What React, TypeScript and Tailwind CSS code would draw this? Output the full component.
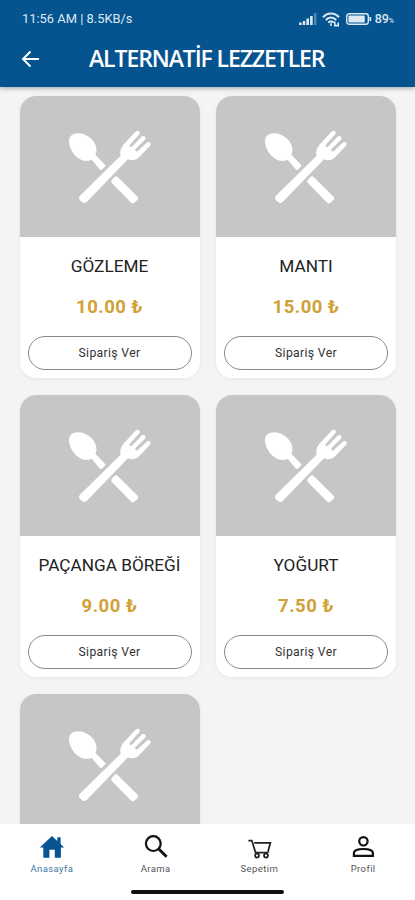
import { useState } from "react";
import type { ComponentType } from "react";

type Product = {
  id: number;
  name?: string;
  price?: string;
};

// A product without details yet shows only its placeholder picture.
const PRODUCTS: Product[] = [
  { id: 1, name: "GÖZLEME", price: "10.00 ₺" },
  { id: 2, name: "MANTI", price: "15.00 ₺" },
  { id: 3, name: "PAÇANGA BÖREĞİ", price: "9.00 ₺" },
  { id: 4, name: "YOĞURT", price: "7.50 ₺" },
  { id: 5 },
];

function Utensils() {
  return (
    <svg viewBox="0 0 300 270" className="w-[100px] h-[90px] -mt-[3px]" aria-hidden="true">
      <g fill="#fff">
        <path d="M27 64C27 48 38 40 54 40C80 40 106 62 109 84C110 92 109 99 106 104L135 134Q138 138 134 141L125 149Q121 151 118 147L95 119C87 123 80 123 72 122C48 118 27 88 27 64Z" />
        <path d="M163 171Q168 166 173 171L233 230Q237 235 233 239L222 249Q217 252 212 247L155 188Q152 184 155 180Z" />
        <path d="M59 228L182 107C178 94 184 81 193 71L228 34Q233 30 238 34Q241 38 238 43L209 75Q207 80 211 81Q214 82 217 79L246 49Q251 46 255 50Q259 54 255 59L226 88Q224 93 228 94Q231 96 234 92L262 67Q267 64 271 68Q274 72 270 77L238 111C228 121 215 123 204 118L80 246Q73 252 66 246L59 240Q55 234 59 228Z" />
      </g>
    </svg>
  );
}

function HomeIcon() {
  return (
    <svg viewBox="0 0 26 24" className="w-[26px] h-6" fill="#075492">
      <path d="M13 1 25.2 12.5H21.9V22.8H15.8V14.8H10.4V22.8H4.3V12.5H.8Z" />
      <path d="M18.3 2.2H21.6V9.8L18.3 7Z" />
    </svg>
  );
}

function SearchIcon() {
  return (
    <svg viewBox="0 0 26 24" className="w-[26px] h-6" fill="none" stroke="#111" strokeWidth="2.2">
      <circle cx="10.3" cy="8.6" r="7.4" />
      <path d="M15.8 14 23.6 21.8" strokeWidth="2.8" />
    </svg>
  );
}

function CartIcon() {
  return (
    <svg viewBox="0 0 26 24" className="w-[26px] h-6" fill="none" stroke="#222" strokeWidth="1.7">
      <path d="M2.4 5.6H5.8L9.6 17.6H22" />
      <path d="M8.2 7.8H24.4L22.3 15.4V17.6" />
      <circle cx="11" cy="20.6" r="2" />
      <circle cx="20" cy="20.6" r="2" />
    </svg>
  );
}

function ProfileIcon() {
  return (
    <svg viewBox="0 0 26 24" className="w-[26px] h-6" fill="none" stroke="#111" strokeWidth="2.2">
      <circle cx="13.4" cy="6.3" r="4.2" />
      <path d="M3.9 20.8V18C3.9 15.6 7.9 14 13.4 14S22.9 15.6 22.9 18V20.8Z" />
    </svg>
  );
}

const TABS: { key: string; label: string; Icon: ComponentType }[] = [
  { key: "home", label: "Anasayfa", Icon: HomeIcon },
  { key: "search", label: "Arama", Icon: SearchIcon },
  { key: "cart", label: "Sepetim", Icon: CartIcon },
  { key: "profile", label: "Profil", Icon: ProfileIcon },
];

function StatusBar() {
  return (
    <div className="h-[37px] pt-px pl-[22px] pr-[21px] flex items-center justify-between text-[#dce9f5]">
      <span className="text-[12.9px] whitespace-nowrap">11:56 AM | 8.5KB/s</span>
      <div className="flex items-center">
        <svg viewBox="0 0 18 12" className="w-[18px] h-3 mr-[5px]" fill="currentColor">
          <path d="M0 9.5H2.6V12H0ZM3.7 8H6.3V12H3.7ZM7.4 5.6H10V12H7.4ZM11.1 3H13.7V12H11.1Z" />
          <path d="M15 0H17.4V12H15Z" opacity=".35" />
        </svg>
        <svg viewBox="0 0 18 15" className="w-[18px] h-[15px] mr-[6px]" fill="none" stroke="currentColor" strokeWidth="2">
          <path d="M1 5.2C5.5 0.3 12.5 0.3 17 5.2" />
          <path d="M3.8 8C7 4.8 11 4.8 14.2 8" />
          <path d="M6.2 10.6C8 9 10 9 11.8 10.6" />
          <path d="M9 11.2V14M12.8 9.5V13.6H16.2V10.6" strokeWidth="1.6" />
        </svg>
        <svg viewBox="0 0 26 12" className="w-[26px] h-3 mr-[3px]">
          <rect x=".7" y=".7" width="21.6" height="10.6" rx="2.6" fill="none" stroke="currentColor" strokeWidth="1.4" />
          <rect x="2.4" y="2.6" width="16.4" height="6.8" rx="1" fill="currentColor" />
          <path d="M23.4 4H25.2V8H23.4Z" fill="currentColor" />
        </svg>
        <span className="text-[12.5px] font-medium leading-none">
          89<span className="text-[7px]">%</span>
        </span>
      </div>
    </div>
  );
}

function ProductCard({ product }: { product: Product }) {
  return (
    <article className="h-[282px] rounded-[16px] overflow-hidden bg-white shadow-[0_1px_4px_rgba(0,0,0,0.06)]">
      <div className="h-[140.5px] bg-[#c6c6c6] flex items-center justify-center">
        <Utensils />
      </div>
      {product.name && (
        <div className="px-2 flex flex-col items-center">
          <h2 className="mt-[17px] h-6 leading-6 text-[17.2px] text-[#222] whitespace-nowrap">{product.name}</h2>
          <p className="mt-[17px] h-6 leading-6 text-[18.5px] font-bold tracking-[0.5px] text-[#d0a135]">
            {product.price}
          </p>
          <button
            type="button"
            className="mt-[17px] w-full h-[34px] rounded-full border border-[#8a8a8a] text-[12.2px] tracking-[0.35px] text-[#333]"
          >
            Sipariş Ver
          </button>
        </div>
      )}
    </article>
  );
}

export default function App() {
  const [tab, setTab] = useState("home");

  return (
    <div className="w-[415px] h-[900px] overflow-hidden flex flex-col bg-[#f4f4f4] font-['Roboto',sans-serif]">
      <header className="relative h-[87px] shrink-0 bg-[#05538f] shadow-[0_1px_5px_rgba(0,0,0,0.35)]">
        <StatusBar />
        <div className="h-[43px] pl-[21px] flex items-center">
          <button type="button" aria-label="Geri" className="w-[18px] h-[18px]">
            <svg viewBox="0 0 18 18" fill="none" stroke="#fff" strokeWidth="2">
              <path d="M18 9H2M9.5 1.5 2 9 9.5 16.5" />
            </svg>
          </button>
          <h1 className="ml-[50px] whitespace-nowrap text-[23px] font-semibold tracking-[-1.1px] text-white font-['Open_Sans',sans-serif]">
            ALTERNATİF LEZZETLER
          </h1>
        </div>
      </header>

      <main className="flex-1 min-h-0 overflow-hidden pt-[9.4px] pl-[19.5px] pr-[19px]">
        <div className="grid grid-cols-2 gap-x-[16.5px] gap-y-[17px]">
          {PRODUCTS.map((p) => (
            <ProductCard key={p.id} product={p} />
          ))}
        </div>
      </main>

      <nav className="h-[76px] shrink-0 bg-white">
        <div className="h-[66px] pt-[11px] grid grid-cols-4">
          {TABS.map(({ key, label, Icon }) => (
            <button
              key={key}
              type="button"
              onClick={() => setTab(key)}
              className="flex flex-col items-center justify-start"
            >
              <Icon />
              <span
                className={`mt-1 text-[9.5px] leading-3 tracking-[0.4px] ${tab === key ? "text-[#3a7a9f]" : "text-[#555]"}`}
              >
                {label}
              </span>
            </button>
          ))}
        </div>
        <div className="mx-auto w-[153px] h-[3.5px] rounded-full bg-[#111]" />
      </nav>
    </div>
  );
}
